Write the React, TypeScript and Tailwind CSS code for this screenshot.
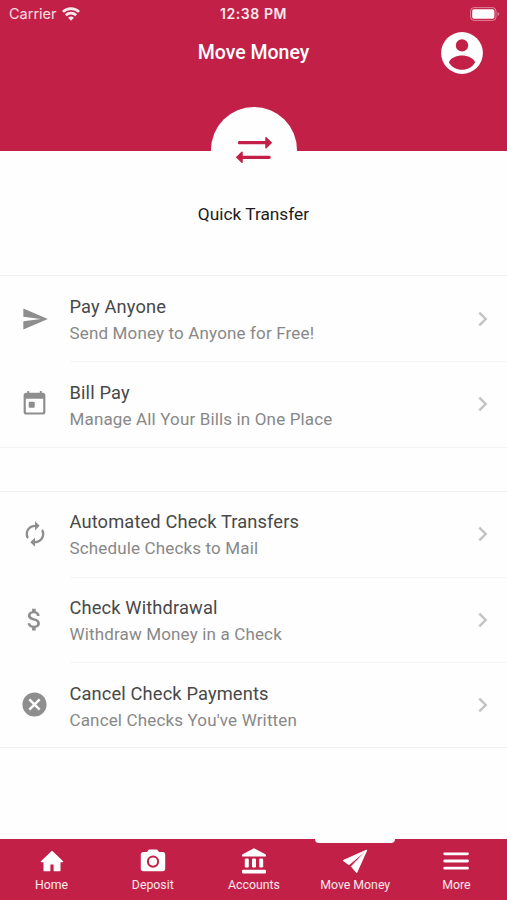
import React from "react";
import { MdAttachMoney, MdAutorenew, MdCancel, MdSend } from "react-icons/md";

interface MenuItem {
  title: string;
  subtitle: string;
  icon: React.ReactNode;
}

interface TabItem {
  label: string;
  icon: React.ReactNode;
  active?: boolean;
}

const WifiIcon = () => (
  <svg width="18" height="14" viewBox="0 0 18 14" fill="none" stroke="currentColor" strokeWidth="2.7">
    <path d="M0.9 4.9a11.6 11.6 0 0 1 16.2 0" />
    <path d="M3.8 8.2a7.5 7.5 0 0 1 10.4 0" />
    <path d="M9 13.8l-2.9-3a4.2 4.2 0 0 1 5.8 0z" fill="currentColor" stroke="none" />
  </svg>
);

const BatteryIcon = () => (
  <svg width="30" height="14" viewBox="0 0 30 14">
    <rect x="0.6" y="0.6" width="25.4" height="12.8" rx="3.4" fill="none" stroke="#fff" strokeOpacity="0.45" />
    <rect x="2.2" y="2.2" width="22.2" height="9.6" rx="1.8" fill="#fff" />
    <path d="M27.6 5c1.8.8 1.8 3.2 0 4z" fill="#fff" fillOpacity="0.5" />
  </svg>
);

const ProfileIcon = () => (
  <svg width="42" height="42" viewBox="0 0 42 42">
    <circle cx="21" cy="21" r="20.9" fill="#fff" />
    <circle cx="21" cy="13.4" r="6.2" fill="#c22047" />
    <path d="M8 30.800c.4-4.600 7.900-7.200 13-7.200s12.600 2.600 13 7.200c-2.900 4.500-7.600 7-13 7s-10.100-2.500-13-7z" fill="#c22047" />
  </svg>
);

const TransferIcon = () => (
  <svg width="38" height="28" viewBox="0 0 38 28" fill="currentColor" stroke="currentColor" strokeLinecap="round" strokeLinejoin="round">
    <path d="M4.4 6.7H31M34.2 21.3H7" strokeWidth="3.2" />
    <path d="M31 1.7l5.2 5-5.2 5zM7 16.3l-5.2 5 5.2 5z" strokeWidth="1.5" />
  </svg>
);

const CalendarIcon = () => (
  <svg width="29" height="29" viewBox="0 0 24 24" fill="currentColor">
    <path d="M19 3h-1V1.6h-1.6V3H7.6V1.6H6V3H5c-1.1 0-2 .9-2 2v14.2c0 1.1.9 2 2 2h14c1.1 0 2-.9 2-2V5c0-1.1-.9-2-2-2zm.2 15.8c0 .4-.3.6-.6.6H5.4c-.4 0-.6-.3-.6-.6V8h14.4z" />
    <rect x="7.2" y="10.6" width="5" height="5" rx="0.9" />
  </svg>
);

const ChevronIcon = () => (
  <svg width="10" height="16" viewBox="0 0 10 16" fill="none" stroke="currentColor" strokeWidth="2.4">
    <path d="M1.3 1.7L7.7 8l-6.4 6.3" />
  </svg>
);

const HomeIcon = () => (
  <svg width="24" height="22" viewBox="0 0 24 22" fill="currentColor" stroke="currentColor" strokeLinejoin="round">
    <path d="M12 1.4L1.3 11.6h2.8v9h5.7V14h4.4v6.6h5.7v-9h2.8z" strokeWidth="1.2" />
  </svg>
);

const CameraIcon = () => (
  <svg width="26" height="24" viewBox="0 0 26 24" fill="currentColor">
    <path
      fillRule="evenodd"
      d="M8.2 1.2Q8.7.5 9.5.5h7Q17.3.5 17.8 1.2L19 3h3.6q2.6 0 2.6 2.6v14q0 2.6-2.6 2.6H3.4Q.8 22.2.8 19.6V5.6Q.8 3 3.4 3H7zM13 6.5a6.1 6.1 0 1 0 0 12.2 6.1 6.1 0 1 0 0-12.2zM13 8.5a4.1 4.1 0 1 1 0 8.2 4.1 4.1 0 1 1 0-8.2z"
    />
  </svg>
);

const BankIcon = () => (
  <svg width="26" height="28" viewBox="0 0 26 28" fill="currentColor">
    <path d="M13 1.2L24.4 7.3q.6.4.6 1v.6q0 .7-.8.7H1.8Q1 9.600 1 8.9v-.6q0-.6.6-1z" />
    <rect x="3.800" y="11.5" width="4" height="9" rx="1.3" />
    <rect x="11" y="11.5" width="4" height="9" rx="1.3" />
    <rect x="18.200" y="11.5" width="4" height="9" rx="1.3" />
    <rect x="1" y="22.800" width="24" height="3.800" rx="1.3" />
  </svg>
);

const PlaneIcon = () => (
  <svg width="26" height="25" viewBox="0 0 26 25" fill="currentColor" stroke="currentColor" strokeWidth="0.9" strokeLinejoin="round">
    <path d="M24.3 1.2L1.1 11.5l5.9 4.3zM24.8 1.2L9.3 17.4l5.4 6.4z" />
  </svg>
);

const MenuIcon = () => (
  <svg width="26" height="20" viewBox="0 0 26 20" stroke="currentColor" strokeWidth="2.8" strokeLinecap="round">
    <path d="M1.7 2.8h22.8M1.7 10h22.8M1.7 17.2h22.8" />
  </svg>
);

const paymentItems: MenuItem[] = [
  { title: "Pay Anyone", subtitle: "Send Money to Anyone for Free!", icon: <MdSend size={28} /> },
  { title: "Bill Pay", subtitle: "Manage All Your Bills in One Place", icon: <CalendarIcon /> },
];

const checkItems: MenuItem[] = [
  { title: "Automated Check Transfers", subtitle: "Schedule Checks to Mail", icon: <MdAutorenew size={28} /> },
  { title: "Check Withdrawal", subtitle: "Withdraw Money in a Check", icon: <MdAttachMoney size={29} /> },
  { title: "Cancel Check Payments", subtitle: "Cancel Checks You've Written", icon: <MdCancel size={29} /> },
];

const tabs: TabItem[] = [
  { label: "Home", icon: <HomeIcon /> },
  { label: "Deposit", icon: <CameraIcon /> },
  { label: "Accounts", icon: <BankIcon /> },
  { label: "Move Money", icon: <PlaneIcon />, active: true },
  { label: "More", icon: <MenuIcon /> },
];

const MenuList: React.FC<{ items: MenuItem[] }> = ({ items }) => (
  <ul className="border-y border-[#f2f2f2]">
    {items.map((item, index) => (
      <li key={item.title} className="flex h-[85.3px]">
        <div className="flex w-[69.5px] shrink-0 items-center justify-center text-[#8e8e8e]">{item.icon}</div>
        <div className={`flex flex-1 items-center justify-between pr-[19.5px] ${index > 0 ? "border-t border-[#f5f5f5]" : ""}`}>
          <div className="pt-[2.4px]">
            <h2 className="text-[18.3px] leading-[26px] tracking-[0.13px] text-[#484848]">{item.title}</h2>
            <p className="text-[17px] leading-[26px] tracking-[0.15px] text-[#888]">{item.subtitle}</p>
          </div>
          <span className="text-[#c2c2c2]">
            <ChevronIcon />
          </span>
        </div>
      </li>
    ))}
  </ul>
);

const App: React.FC = () => {
  return (
    <div className="flex h-[900px] w-full flex-col bg-[#fefefe] font-['Roboto',sans-serif]">
      <header className="h-[151px] shrink-0 bg-[#c22047] text-white">
        <div className="grid h-[27px] grid-cols-3 items-center px-[9px] font-['Inter',sans-serif]">
          <div className="flex items-center gap-[5px] text-white/90">
            <span className="text-[14.5px] text-white/85">Carrier</span>
            <WifiIcon />
          </div>
          <div className="text-center text-[14px] font-semibold tracking-[0.6px] whitespace-nowrap text-white/90">12:38 PM</div>
          <div className="-mr-0.5 flex justify-end">
            <BatteryIcon />
          </div>
        </div>
        <div className="grid h-[51px] grid-cols-[1fr_auto_1fr] items-center">
          <h1 className="col-start-2 pt-px text-[19.5px] font-medium">Move Money</h1>
          <div className="flex justify-end pr-[24px]">
            <ProfileIcon />
          </div>
        </div>
      </header>

      <main className="flex-1">
        <section className="flex h-[124px] flex-col items-center">
          <div className="-mt-[44px] flex size-[86px] shrink-0 items-center justify-center rounded-full bg-[#fefefe] text-[#c22047]">
            <TransferIcon />
          </div>
          <p className="mt-[9px] text-[17.3px] leading-6 text-[#1c1c1c]">Quick Transfer</p>
        </section>
        <MenuList items={paymentItems} />
        <div className="h-[43px]" />
        <MenuList items={checkItems} />
      </main>

      <nav className="grid h-[61px] shrink-0 grid-cols-5 bg-[#c22047] pl-px text-white">
        {tabs.map((tab) => (
          <div key={tab.label} className="relative flex flex-col items-center">
            {tab.active && <span className="absolute top-0 h-1 w-20 rounded-b bg-[#fefefe]" />}
            <div className="mt-[7px] flex h-[30px] items-center">{tab.icon}</div>
            <span className="mt-px text-[12.3px] leading-4 whitespace-nowrap text-white/90">{tab.label}</span>
          </div>
        ))}
      </nav>
    </div>
  );
};

export default App;
